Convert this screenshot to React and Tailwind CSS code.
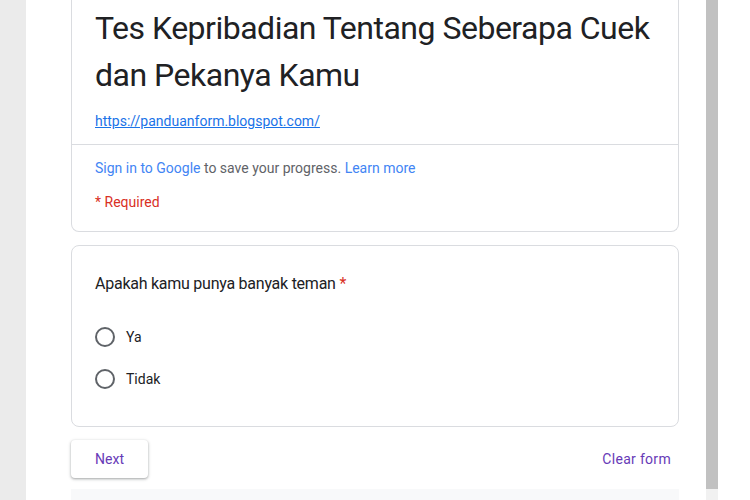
import React from "react";

const Radio = ({ label }) => (
  <div className="flex items-center h-5">
    <span className="w-5 h-5 rounded-full border-2 border-[#5f6368] box-border" />
    <span className="ml-[11px] text-[14px] leading-5 text-[#202124]">{label}</span>
  </div>
);

export default function App() {
  return (
    <div
      className="w-[750px] h-[500px] overflow-hidden flex bg-white"
      style={{ fontFamily: "Roboto, 'Liberation Sans', sans-serif" }}
    >
      {/* left page gutter */}
      <div className="w-[26px] shrink-0 bg-[#ebebeb]" />

      {/* form column */}
      <div className="w-[679px] shrink-0 bg-white pl-[45px] pr-[26px]">
        <div className="w-[608px] border border-t-0 border-[#dadce0] rounded-b-lg bg-white">
          <div className="pl-[23px] pr-4 pt-[5px] pb-[13px]">
            <h1 className="text-[32px] leading-[47px] tracking-[-0.5px] text-[#202124] font-normal">
              Tes Kepribadian Tentang Seberapa Cuek dan Pekanya Kamu
            </h1>
            <a
              href="#"
              className="block mt-3 text-[14px] leading-5 text-[#1a73e8] underline"
            >
              https://panduanform.blogspot.com/
            </a>
          </div>
          <div className="border-t border-[#dadce0] pl-[23px] pr-6 pt-[13px] pb-[19px]">
            <p className="text-[14px] leading-5 text-[#5f6368]">
              <span className="text-[#4285f4]">Sign in to Google</span> to save your progress.{" "}
              <span className="text-[#4285f4]">Learn more</span>
            </p>
            <p className="mt-[14px] text-[14px] leading-5 text-[#d93025]">* Required</p>
          </div>
        </div>

        <div className="mt-[13px] w-[608px] border border-[#dadce0] rounded-lg bg-white pl-[23px] pr-6 pt-[26px] pb-[37px]">
          <p className="text-[16px] leading-6 tracking-[-0.25px] text-[#202124]">
            Apakah kamu punya banyak teman <span className="text-[#d93025]">*</span>
          </p>
          <div className="mt-[31px] flex flex-col gap-[22px]">
            <Radio label="Ya" />
            <Radio label="Tidak" />
          </div>
        </div>

        <div className="mt-[13px] w-[608px] flex items-center justify-between">
          <button className="w-[77px] h-[38px] rounded bg-white text-[14px] text-[#673ab7] shadow-[0_1px_2px_0_rgba(60,64,67,0.3),0_1px_3px_1px_rgba(60,64,67,0.15)]">
            Next
          </button>
          <span className="mr-2 text-[14px] tracking-[0.3px] text-[#673ab7]">Clear form</span>
        </div>

        <div className="mt-[11px] w-[608px] h-10 bg-[#f8f9fa]" />
      </div>

      {/* scrollbar */}
      <div className="w-[14px] shrink-0 flex flex-col items-center">
        <div className="w-3 h-[489px] bg-[#c1c1c1]" />
        <div className="w-3 flex-1 bg-[#f1f1f1]" />
      </div>

      <div className="flex-1 bg-white" />
    </div>
  );
}
